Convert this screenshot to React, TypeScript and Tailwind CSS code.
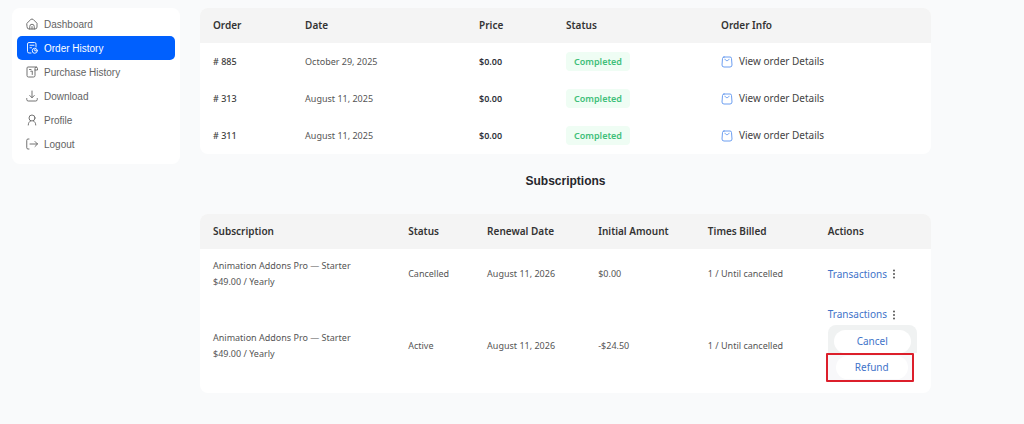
import type { ReactNode } from "react";

const stroke = {
    width: 12,
    height: 12,
    viewBox: "0 0 24 24",
    fill: "none",
    stroke: "currentColor",
    strokeWidth: 1.8,
    strokeLinecap: "round",
    strokeLinejoin: "round",
    "aria-hidden": true,
} as const;

const navItems: { label: string; icon: ReactNode; active?: boolean }[] = [
    {
        label: "Dashboard",
        icon: (
            <svg {...stroke}>
                <path d="M2 10.5 9.5 3a4 4 0 0 1 5 0L22 10.5V18a4 4 0 0 1-4 4H6a4 4 0 0 1-4-4Z" />
                <path d="M7.5 22v-5a4.5 4.5 0 0 1 9 0v5M12 17v5" />
            </svg>
        ),
    },
    {
        label: "Order History",
        active: true,
        icon: (
            <svg {...stroke}>
                <path d="M10 22H6a3 3 0 0 1-3-3V4a3 3 0 0 1 3-3h11a3 3 0 0 1 3 3v6M8 6.5h8M8 11.5h3" />
                <circle cx="17.5" cy="17.5" r="5" />
                <path d="M17.5 15v2.5H20" />
            </svg>
        ),
    },
    {
        label: "Purchase History",
        icon: (
            <svg {...stroke}>
                <path d="M21 2H4a2 2 0 0 0-2 2v15a3 3 0 0 0 3 3h10a3 3 0 0 0 3-3V5a2.500 2.500 0 0 1 5 0v3h-5" />
                <path d="M7 7h3M9.500 10.500 12.500 10v7" />
            </svg>
        ),
    },
    {
        label: "Download",
        icon: (
            <svg {...stroke}>
                <path d="M12 2v13M7.5 11l4.5 4.5 4.5-4.5M1.5 17v2a3 3 0 0 0 3 3h15a3 3 0 0 0 3-3v-2" />
            </svg>
        ),
    },
    {
        label: "Profile",
        icon: (
            <svg {...stroke}>
                <circle cx="12" cy="8" r="6" />
                <path d="M4.5 22c0-4.5 2.5-7 5-8.5M19.5 22c0-4.5-2.5-7-5-8.5" />
            </svg>
        ),
    },
    {
        label: "Logout",
        icon: (
            <svg {...stroke}>
                <path d="M6 2H4a2.5 2.5 0 0 0-2.5 2.5v15A2.5 2.5 0 0 0 4 22h2M8 12h15M18 7l5 5-5 5" />
            </svg>
        ),
    },
];

const orders = [
    { id: "885", date: "October 29, 2025", price: "$0.00", status: "Completed" },
    { id: "313", date: "August 11, 2025", price: "$0.00", status: "Completed" },
    { id: "311", date: "August 11, 2025", price: "$0.00", status: "Completed" },
];

const subscriptions = [
    { status: "Cancelled", renewal: "August 11, 2026", amount: "$0.00", menuOpen: false },
    { status: "Active", renewal: "August 11, 2026", amount: "-$24.50", menuOpen: true },
];

function BagIcon() {
    return (
        <svg {...stroke} className="shrink-0 text-[#5b93ee]">
            <path d="M6 2h12a3 3 0 0 1 3 3l1 13a4 4 0 0 1-4 4H6a4 4 0 0 1-4-4L3 5a3 3 0 0 1 3-3Z" />
            <path d="M8 6.5c1 4 7 4 8 0" />
        </svg>
    );
}

function Sidebar() {
    return (
        <aside className="w-[168px] shrink-0 rounded-lg bg-white px-[5px] pt-1 pb-2 font-['Liberation_Sans',sans-serif] text-[10px]">
            <nav>
                {navItems.map((item) => (
                    <a
                        key={item.label}
                        href="#"
                        className={
                            item.active
                                ? "flex h-6 items-center gap-1.5 rounded-[5px] bg-[#0060fe] px-[9px] text-white"
                                : "flex h-6 items-center gap-1.5 rounded-[5px] px-[9px] text-[#636363]"
                        }
                    >
                        {item.icon}
                        {item.label}
                    </a>
                ))}
            </nav>
        </aside>
    );
}

function Head({ titles }: { titles: string[] }) {
    return (
        <thead className="bg-[#f4f4f4] text-[10px] text-[#333]">
            <tr className="h-[35px]">
                {titles.map((title) => (
                    <th key={title} className="pl-[13px] font-semibold">
                        {title}
                    </th>
                ))}
            </tr>
        </thead>
    );
}

function Orders() {
    return (
        <div className="overflow-hidden rounded-lg bg-white">
            <table className="w-full table-fixed text-left">
                <colgroup>
                    <col className="w-[12.6%]" />
                    <col className="w-[23.8%]" />
                    <col className="w-[11.9%]" />
                    <col className="w-[21.2%]" />
                    <col />
                </colgroup>
                <Head titles={["Order", "Date", "Price", "Status", "Order Info"]} />
                <tbody>
                    {orders.map((order) => (
                        <tr key={order.id} className="h-[37px]">
                            <td className="pl-[13px] font-medium text-[#3c3c3c]"># {order.id}</td>
                            <td className="pl-[13px]">{order.date}</td>
                            <td className="pl-[13px] font-semibold text-[#30343c]">{order.price}</td>
                            <td className="pl-[13px]">
                                <span className="inline-block rounded bg-[#effdf4] px-2 py-[3px] font-semibold text-[#3fc07a]">
                                    {order.status}
                                </span>
                            </td>
                            <td className="pl-[13px]">
                                <a href="#" className="flex items-center gap-1.5 text-[10px] text-[#444]">
                                    <BagIcon />
                                    View order Details
                                </a>
                            </td>
                        </tr>
                    ))}
                </tbody>
            </table>
        </div>
    );
}

function Actions({ menuOpen }: { menuOpen: boolean }) {
    return (
        <div className="text-[10px]">
            <div className="flex h-4 items-center gap-1 text-[#4173c9]">
                <a href="#">Transactions</a>
                <button type="button" aria-label="More actions" className="text-[#444]">
                    <svg width="6" height="10" viewBox="0 0 6 10" fill="currentColor" aria-hidden="true">
                        <circle cx="3" cy="1.5" r="0.9" />
                        <circle cx="3" cy="5" r="0.9" />
                        <circle cx="3" cy="8.5" r="0.9" />
                    </svg>
                </button>
            </div>
            {menuOpen && (
                <div className="mt-0.5 w-[89px] pb-1 text-[#4173c9]">
                    <div className="rounded-t-lg bg-[#f0f2f2] px-1.5 pt-[5px]">
                        <button type="button" className="h-[23px] w-full rounded-full bg-white">
                            Cancel
                        </button>
                    </div>
                    <div className="-ml-0.5 w-[88px] rounded-[1px] border-2 border-[#dc1f2b] bg-[#f8f8fa] py-px pr-1 pl-2">
                        <button type="button" className="block h-[23px] w-full rounded-full bg-white">
                            Refund
                        </button>
                    </div>
                </div>
            )}
        </div>
    );
}

function Subscriptions() {
    return (
        <div className="overflow-hidden rounded-lg bg-white">
            <table className="w-full table-fixed text-left">
                <colgroup>
                    <col className="w-[26.7%]" />
                    <col className="w-[10.8%]" />
                    <col className="w-[15.2%]" />
                    <col className="w-[15%]" />
                    <col className="w-[16.4%]" />
                    <col />
                </colgroup>
                <Head
                    titles={["Subscription", "Status", "Renewal Date", "Initial Amount", "Times Billed", "Actions"]}
                />
                <tbody>
                    {subscriptions.map((sub) => (
                        <tr key={sub.status} className={sub.menuOpen ? "h-[94px]" : "h-[50px]"}>
                            <td className="pl-[13px] leading-4">
                                Animation Addons Pro — Starter
                                <br />
                                $49.00 / Yearly
                            </td>
                            <td className="pl-[13px]">{sub.status}</td>
                            <td className="pl-[13px]">{sub.renewal}</td>
                            <td className="pl-[13px]">{sub.amount}</td>
                            <td className="pl-[13px]">1 / Until cancelled</td>
                            <td className="pl-[13px]">
                                <Actions menuOpen={sub.menuOpen} />
                            </td>
                        </tr>
                    ))}
                </tbody>
            </table>
        </div>
    );
}

export default function App() {
    return (
        <div className="flex min-h-screen items-start gap-5 bg-[#f9fafb] pt-2 pr-[93px] pl-3">
            <Sidebar />
            <main className="min-w-0 flex-1 font-['Noto_Sans',sans-serif] text-[9px] text-[#555]">
                <Orders />
                <h2 className="mt-[19px] mb-[25px] text-center font-['Liberation_Sans',sans-serif] text-xs leading-4 font-bold text-[#26262c]">
                    Subscriptions
                </h2>
                <Subscriptions />
            </main>
        </div>
    );
}
